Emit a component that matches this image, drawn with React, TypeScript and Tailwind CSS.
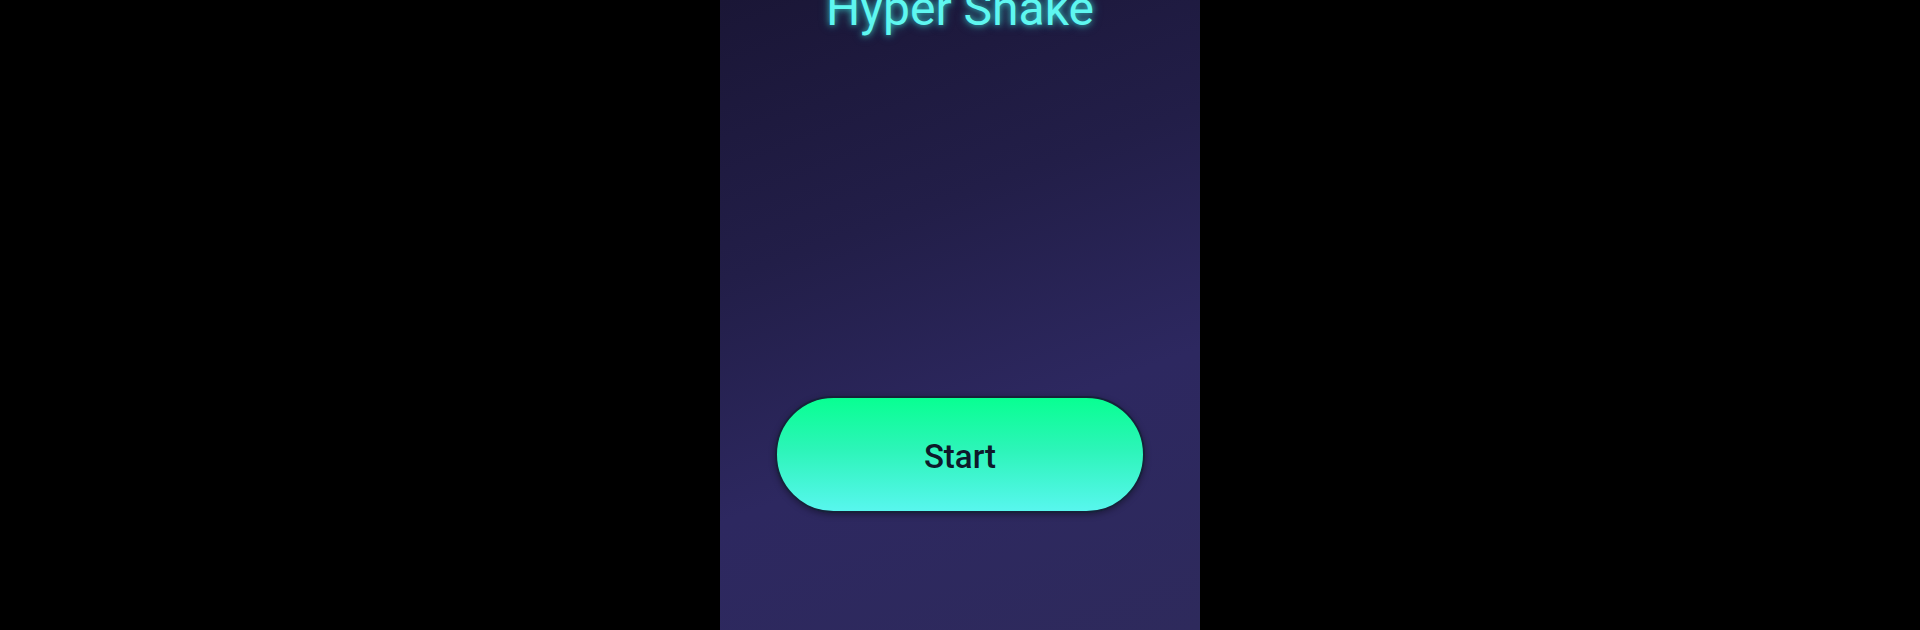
export default function App() {
  return (
    <div className="w-full h-[630px] bg-black flex justify-center overflow-hidden" style={{ fontFamily: 'Roboto, "Noto Sans", sans-serif' }}>
      <div className="w-[480px] h-full flex flex-col items-center bg-[linear-gradient(160deg,#1a1636_0%,#221e48_35%,#2d2860_65%,#2e2a5c_100%)]">
        <h1 className="mt-[-15px] text-[48px] leading-[48px] font-normal text-[#5ef7f0] [text-shadow:0_0_6px_rgba(60,240,230,0.75),0_0_12px_rgba(60,240,230,0.35)] whitespace-nowrap">
          Hyper Snake
        </h1>
        <button className="mt-[363px] w-[370px] h-[117px] rounded-full border-2 border-[#16223a] bg-[linear-gradient(180deg,#08ff92_0%,#2cf5b8_45%,#58f6ee_100%)] shadow-[0_2px_6px_rgba(0,0,0,0.35)] flex items-center justify-center pt-[4px]">
          <span className="text-[33px] leading-[33px] font-medium text-[#0e1a2b]">Start</span>
        </button>
      </div>
    </div>
  );
}
